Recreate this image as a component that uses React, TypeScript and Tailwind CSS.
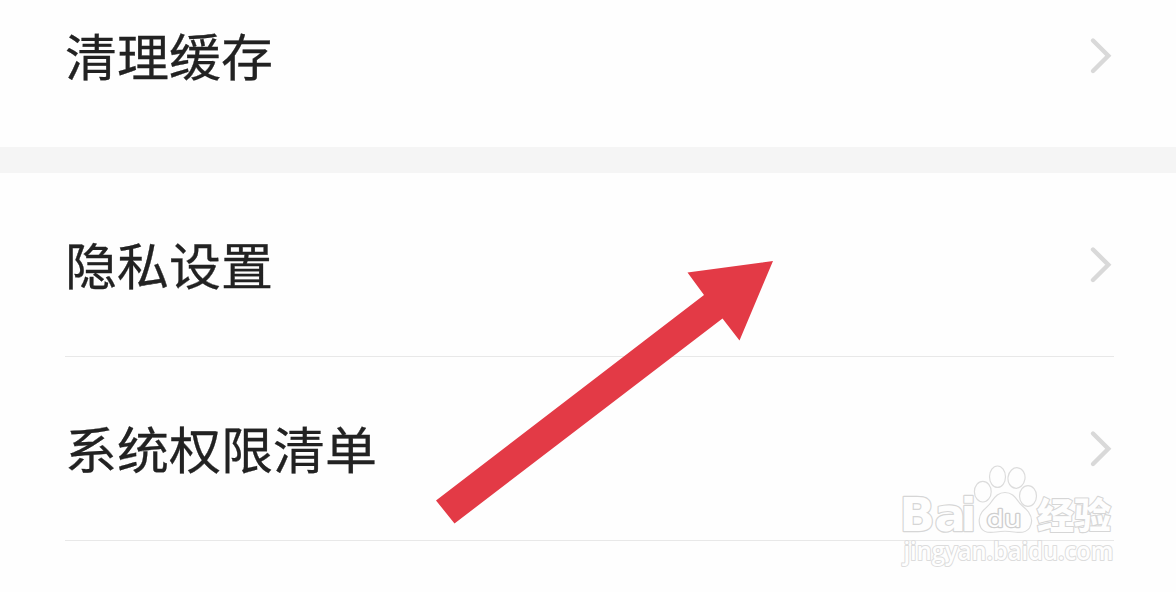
type RowProps = { label: string; className?: string };

function Chevron() {
  return (
    <svg width="26" height="40" viewBox="0 0 26 40" fill="none" className="shrink-0">
      <path d="M5 4.5 L20.3 19.7 L5 35" stroke="#d9d9d9" strokeWidth="4.4" strokeLinecap="round" strokeLinejoin="miter" />
    </svg>
  );
}

function Row({ label, className = "" }: RowProps) {
  return (
    <div className={`flex items-center justify-between ${className}`}>
      <span className="mb-[2px] scale-y-[0.97] text-[52px] leading-[60px] whitespace-nowrap text-[#222222] [-webkit-text-stroke:0.3px_#222222]">
        {label}
      </span>
      <Chevron />
    </div>
  );
}

function Arrow() {
  return (
    <svg className="absolute top-[250px] left-[430px]" width="350" height="280" viewBox="430 250 350 280">
      <path d="M773 261 L687.5 272.5 L704 295 L436 500.5 L454.5 523.5 L722.5 318.5 L739.5 340.5 Z" fill="#e33a46" />
    </svg>
  );
}

function Watermark() {
  return (
    <svg
      className="absolute top-[460px] left-[896px]"
      width="224"
      height="112"
      viewBox="896 460 224 112"
      fill="#fefefe"
      stroke="#dcdcdc"
      strokeWidth="1.2"
      strokeLinejoin="round"
    >
      <text x="899.5 934.5 960.5" y="531" fontFamily="'DejaVu Sans', sans-serif" fontWeight="700" fontSize="46.5" paintOrder="stroke" stroke="#d6d6d6" strokeWidth="2.4">Bai</text>
      <ellipse cx="982.8" cy="491.7" rx="8.4" ry="10.3" />
      <ellipse cx="997.5" cy="476.7" rx="8" ry="10.7" />
      <ellipse cx="1016.5" cy="478" rx="8.5" ry="10.3" transform="rotate(8 1016.5 478)" />
      <ellipse cx="1028" cy="496" rx="8.5" ry="10.3" />
      <path d="M1005 492.5 C1012 492.5 1015 497 1018 501 C1021 506 1025 507 1028.5 512 C1032 517 1032.5 523 1029.5 528 C1026 533 1020 533 1014 532 C1008 531 1002 531 996 532 C990 533 984 533 981 528 C978 523 979 516 982 512 C985 508 989 506 992 501 C995 497 998 492.5 1005 492.5 Z" />
      <text x="986.5" y="526.5" fontFamily="'DejaVu Sans', sans-serif" fontWeight="400" fontSize="22.5" textLength="35" lengthAdjust="spacingAndGlyphs" paintOrder="stroke" stroke="#cfcfcf" strokeWidth="2.4">du</text>
      <text x="1037" y="528.5" fontFamily="'Noto Sans CJK SC', sans-serif" fontWeight="900" fontSize="36.5" textLength="74" lengthAdjust="spacingAndGlyphs" paintOrder="stroke" stroke="#d6d6d6" strokeWidth="2.2">经验</text>
      <text x="903.5" y="559.5" fontFamily="'Open Sans', sans-serif" fontWeight="600" fontSize="25" textLength="210" lengthAdjust="spacingAndGlyphs" paintOrder="stroke" stroke="#dcdcdc" strokeWidth="2">jingyan.baidu.com</text>
    </svg>
  );
}

export default function App() {
  return (
    <main className="relative flex h-[592px] w-[1176px] flex-col overflow-hidden bg-[#fefefe] font-['Noto_Sans_CJK_SC',sans-serif]">
      <section className="h-[147px] pr-[62px] pl-[65px]">
        <Row label="清理缓存" className="h-[111px]" />
      </section>
      <div className="h-[26px] bg-[#f5f5f5]" />
      <section className="flex flex-col pr-[62px] pl-[65px]">
        <Row label="隐私设置" className="h-[184px] border-b border-[#e8e8e8]" />
        <Row label="系统权限清单" className="h-[184px] border-b border-[#e8e8e8]" />
      </section>
      <Arrow />
      <Watermark />
    </main>
  );
}
